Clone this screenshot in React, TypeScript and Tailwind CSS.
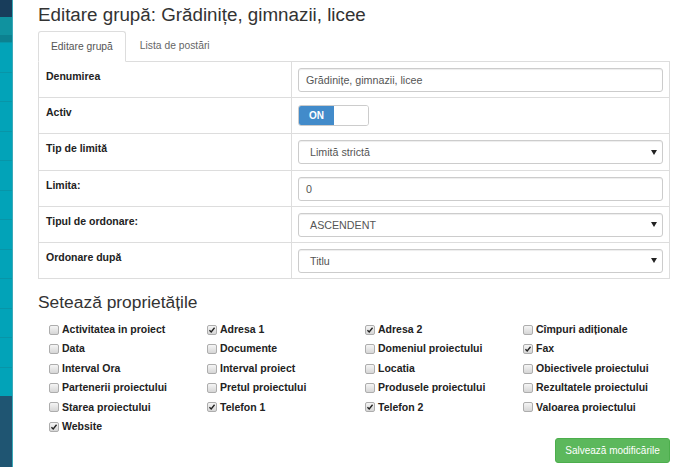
import React from 'react';

/* Editare grupă — formular de editare cu tab-uri, tabel de câmpuri și proprietăți */

const ROWS: { label: string; kind: 'input' | 'toggle' | 'select'; value?: string }[] = [
  { label: 'Denumirea', kind: 'input', value: 'Grădinițe, gimnazii, licee' },
  { label: 'Activ', kind: 'toggle' },
  { label: 'Tip de limită', kind: 'select', value: 'Limită strictă' },
  { label: 'Limita:', kind: 'input', value: '0' },
  { label: 'Tipul de ordonare:', kind: 'select', value: 'ASCENDENT' },
  { label: 'Ordonare după', kind: 'select', value: 'Titlu' },
];

const PROPS: [string, boolean][] = [
  ['Activitatea in proiect', false],
  ['Adresa 1', true],
  ['Adresa 2', true],
  ['Cîmpuri adiționale', false],
  ['Data', false],
  ['Documente', false],
  ['Domeniul proiectului', false],
  ['Fax', true],
  ['Interval Ora', false],
  ['Interval proiect', false],
  ['Locatia', false],
  ['Obiectivele proiectului', false],
  ['Partenerii proiectului', false],
  ['Pretul proiectului', false],
  ['Produsele proiectului', false],
  ['Rezultatele proiectului', false],
  ['Starea proiectului', false],
  ['Telefon 1', true],
  ['Telefon 2', true],
  ['Valoarea proiectului', false],
  ['Website', true],
];

function Sidebar() {
  return (
    <div className="flex w-[13px] shrink-0 flex-col border-r border-[#3aa9b9]">
      <div className="h-[17px] bg-[#183d5b]" />
      <div className="h-[18px] bg-[#10929f]" />
      <div className="h-[7px] bg-[#0c8190]" />
      {Array.from({ length: 12 }).map((_, i) => (
        <div key={i} className="h-[29.5px] border-t border-[#0895a8] bg-[#02a3b8] first:border-t-0" />
      ))}
      <div className="flex-1 bg-[#1f5572]" />
    </div>
  );
}

function Field({ kind, value }: { kind: string; value?: string }) {
  if (kind === 'toggle') {
    return (
      <div className="mt-[1px] flex h-[21px] w-[71px] overflow-hidden rounded-[3px] border border-[#ccc]">
        <div className="flex w-[35px] items-center justify-center bg-[#428bca] text-[10px] font-bold text-white">ON</div>
        <div className="flex-1 bg-white" />
      </div>
    );
  }
  const select = kind === 'select';
  return (
    <div
      className={`flex h-[24px] items-center rounded-[3px] border border-[#ccc] bg-white text-[10.7px] text-[#555] shadow-[inset_0_1px_1px_rgba(0,0,0,0.075)] ${
        select ? 'pr-[5px] pl-[11px]' : 'px-[7px]'
      }`}
    >
      <span className="flex-1">{value}</span>
      {select && <span className="h-0 w-0 border-x-[3px] border-t-[5px] border-x-transparent border-t-[#222]" />}
    </div>
  );
}

function Check({ checked }: { checked: boolean }) {
  return (
    <span className="flex h-[10px] w-[10px] shrink-0 items-center justify-center rounded-[2px] border border-[#adadad] bg-gradient-to-b from-[#f5f5f5] to-[#d6d6d6]">
      {checked && (
        <svg viewBox="0 0 10 10" className="h-[8px] w-[8px]">
          <path d="M1.8 5.2 L4 7.4 L8.2 2.2" fill="none" stroke="#222" strokeWidth="1.7" />
        </svg>
      )}
    </span>
  );
}

export default function App() {
  return (
    <div className="flex h-[467px] w-full overflow-hidden bg-white font-['Liberation_Sans',Arial,sans-serif] text-[#333]">
      <Sidebar />
      <div className="flex flex-1 flex-col pr-[7px] pl-[25px]">
        <h1 className="mt-[5px] text-[18.8px] leading-[20px]">Editare grupă: Grădinițe, gimnazii, licee</h1>

        <div className="mt-[6px] flex h-[31px] items-end border-b border-[#ddd] text-[10.3px]">
          <div className="-mb-px flex h-[31px] items-center rounded-t-[3px] border border-[#ddd] border-b-white bg-white px-[12px] text-[#555]">
            Editare grupă
          </div>
          <div className="ml-[2px] flex h-[30px] items-center px-[12px] text-[#666]">Lista de postări</div>
        </div>

        <div className="border-x border-[#ddd]">
          {ROWS.map((r) => (
            <div key={r.label} className="flex h-[36.2px] border-b border-[#ddd]">
              <div className="w-[253px] shrink-0 border-r border-[#ddd] px-[7px] pt-[8px] text-[10.5px] font-bold leading-[12px] text-[#222]">
                {r.label}
              </div>
              <div className="flex-1 px-[6px] pt-[6px]">
                <Field kind={r.kind} value={r.value} />
              </div>
            </div>
          ))}
        </div>

        <h2 className="mt-[13px] text-[17.4px] leading-[20px]">Setează proprietățile</h2>

        <div className="mt-[8px] grid grid-cols-4">
          {PROPS.map(([name, checked]) => (
            <label key={name} className="flex h-[19.4px] items-center gap-[2px] pl-[11px] text-[10.5px] font-bold text-[#222]">
              <Check checked={checked} />
              <span className="ml-[1px]">{name}</span>
            </label>
          ))}
        </div>

        <div className="mt-[2px] flex justify-end">
          <button className="h-[25px] w-[115px] rounded-[3px] border border-[#4cae4c] bg-[#5cb85c] text-[10px] text-white">
            Salvează modificările
          </button>
        </div>
      </div>
    </div>
  );
}
